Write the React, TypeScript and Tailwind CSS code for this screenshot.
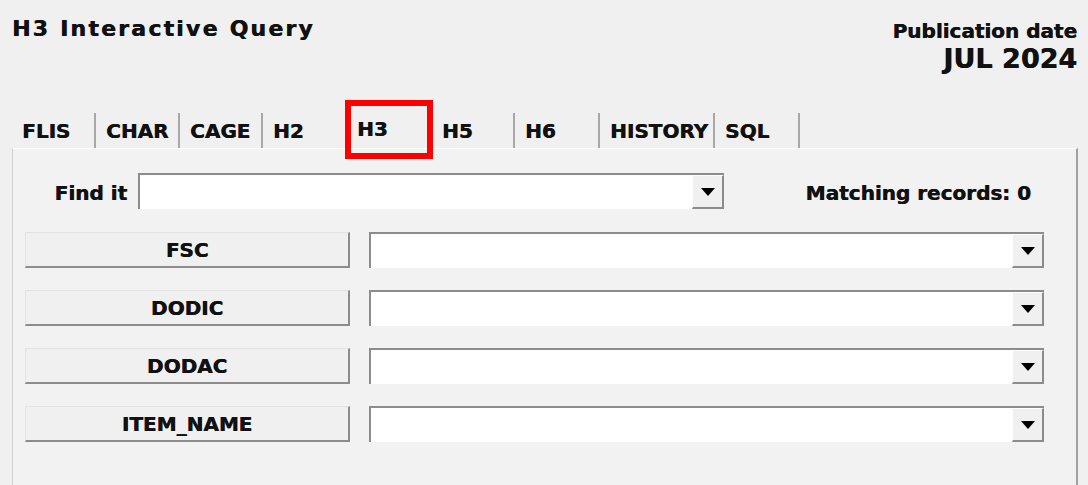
const TABS = [
  { label: "FLIS", w: "w-[84px]" },
  { label: "CHAR", w: "w-[84px]" },
  { label: "CAGE", w: "w-[83px]" },
  { label: "H2", w: "w-[84px]" },
  { label: "H3", w: "w-[85px]" },
  { label: "H5", w: "w-[83px]" },
  { label: "H6", w: "w-[85px]" },
  { label: "HISTORY", w: "w-[115px]" },
  { label: "SQL", w: "w-[85px]" },
];

const FIELDS = ["FSC", "DODIC", "DODAC", "ITEM_NAME"];

function Arrow() {
  return (
    <svg width="14" height="8" viewBox="0 0 14 8" aria-hidden>
      <polygon points="0,0 14,0 7,8" fill="#000" />
    </svg>
  );
}

function Combo({ width }: { width: string }) {
  return (
    <div
      className={`${width} flex h-[36px] border-t-2 border-l-2 border-[#8c8c8c] bg-white`}
    >
      <div className="flex-1" />
      <div className="flex w-[32px] items-center justify-center border-t border-l border-white border-r-2 border-b-2 border-r-[#8c8c8c] border-b-[#8c8c8c] bg-[#f0f0f0]">
        <Arrow />
      </div>
    </div>
  );
}

export default function App() {
  return (
    <div className="h-[485px] w-[1088px] overflow-hidden bg-[#f0f0f0] font-['DejaVu_Sans',sans-serif] font-bold text-[#111] [text-shadow:0.5px_0_0_#111]">
      {/* header */}
      <div className="flex h-[113px] justify-between pl-[12px] pr-[11px]">
        <div className="pt-[18px] text-[22px] leading-none tracking-[2.2px]">H3 Interactive Query</div>
        <div className="pt-[21px] text-right">
          <div className="text-[20px] leading-none">Publication date</div>
          <div className="mt-[4px] text-[27px] leading-none">JUL 2024</div>
        </div>
      </div>

      {/* tabs */}
      <div className="flex h-[35px] pl-[12px] text-[20px] leading-none">
        {TABS.map((t) => (
          <div
            key={t.label}
            className={`${t.w} relative flex items-center border-r-2 border-[#a8a8a8] pl-[10px] ${
              t.label === "H3" ? "pb-[4px]" : ""
            }`}
          >
            {t.label}
            {t.label === "H3" && (
              <div className="absolute top-[-13px] left-[-2px] h-[59px] w-[88px] border-[6px] border-[#ff0000]" />
            )}
          </div>
        ))}
      </div>

      {/* panel */}
      <div className="ml-[12px] h-[337px] w-[1066px] border-t border-l border-t-white border-l-[#cfcfcf] border-r-2 border-r-[#a0a0a0] bg-[#f2f2f2] pt-[24px]">
        <div className="flex h-[36px] items-center text-[20px] leading-none">
          <div className="w-[114px] pt-[3px] text-right">Find it</div>
          <div className="ml-[11px]">
            <Combo width="w-[586px]" />
          </div>
          <div className="flex-1 pt-[3px] pr-[45px] text-right">Matching records: 0</div>
        </div>

        <div className="mt-[23px] flex flex-col gap-[22px]">
          {FIELDS.map((f) => (
            <div key={f} className="flex items-center pl-[12px]">
              <div className="flex h-[36px] w-[325px] items-center justify-center border-t border-l border-[#e2e2e2] border-r-2 border-b-2 border-r-[#8c8c8c] border-b-[#8c8c8c] bg-[#f0f0f0] text-[20px] leading-none">
                {f}
              </div>
              <div className="ml-[19px]">
                <Combo width="w-[675px]" />
              </div>
            </div>
          ))}
        </div>
      </div>
    </div>
  );
}
